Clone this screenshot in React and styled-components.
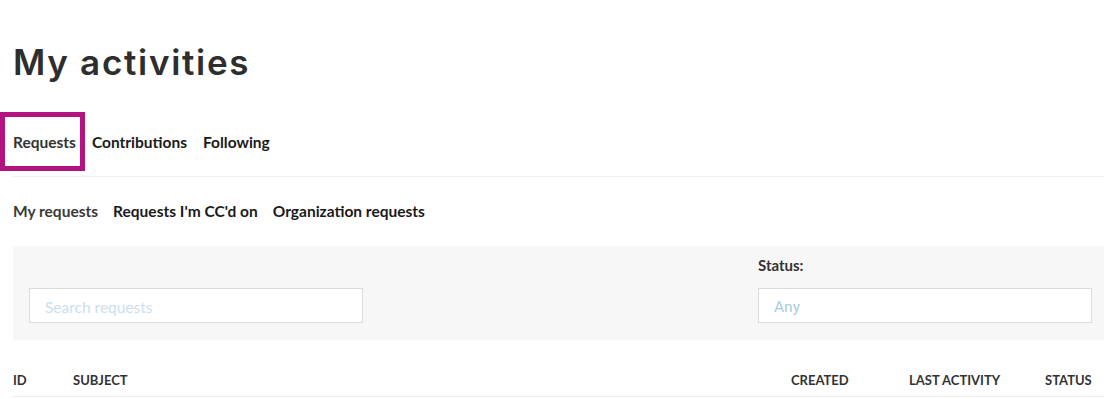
import React from 'react';
import styled, { createGlobalStyle } from 'styled-components';

const GlobalStyle = createGlobalStyle`
  html, body {
    margin: 0;
    padding: 0;
    background: #fff;
    overflow: hidden;
  }
  body {
    font-family: Lato, "Liberation Sans", sans-serif;
    color: #333;
  }
`;

const Page = styled.main`
  width: 1095px;
  padding: 41px 0 0 13px;
`;

const Title = styled.h1`
  margin: 0;
  font-family: Inter, "DejaVu Sans", sans-serif;
  font-size: 35px;
  line-height: 42px;
  font-weight: 600;
  letter-spacing: 1.7px;
  color: #2e2e2e;
`;

const TabList = styled.nav`
  display: flex;
  gap: 16px;
  margin-top: 35px;
  padding-bottom: 10px;
  border-bottom: 1px solid #efefef;
`;

const Tab = styled.a`
  position: relative;
  padding: 14px 0;
  font-size: 15.5px;
  line-height: 20px;
  font-weight: 700;
  color: ${({ $active }) => ($active ? '#333' : '#1a1a1a')};
  text-decoration: none;

  ${({ $focused }) =>
    $focused &&
    `
    &::after {
      content: '';
      position: absolute;
      top: -6px;
      bottom: -5px;
      left: -13px;
      right: -9px;
      border: 5px solid #b3137f;
    }
  `}
`;

const SubNav = styled.nav`
  display: flex;
  gap: 15px;
  margin-top: 24px;
`;

const SubLink = styled.a`
  font-size: 15.5px;
  line-height: 20px;
  font-weight: 700;
  color: ${({ $active }) => ($active ? '#3a3a3a' : '#1a1a1a')};
  text-decoration: none;
`;

const FilterBox = styled.section`
  display: flex;
  justify-content: space-between;
  align-items: flex-end;
  margin-top: 25px;
  padding: 9px 16px 17px;
  background: #f7f7f7;
`;

const Field = styled.div`
  display: flex;
  flex-direction: column;
  width: 334px;
`;

const Label = styled.label`
  font-size: 15px;
  line-height: 20px;
  font-weight: 700;
  color: #333;
  margin-bottom: 13px;
`;

const Input = styled.input`
  box-sizing: border-box;
  height: 35px;
  padding: 2px 15px 0;
  border: 1px solid #dddddd;
  background: #fff;
  font-family: ${({ $alt }) => ($alt ? 'Roboto, "Liberation Sans", sans-serif' : 'Lato, "Liberation Sans", sans-serif')};
  font-size: 15.5px;
  outline: none;

  &::placeholder {
    color: ${({ $alt }) => ($alt ? '#a8cde3' : '#cbe0ee')};
    opacity: 1;
  }
`;

const HeaderRow = styled.div`
  display: grid;
  grid-template-columns: 60px 1fr 118px 136px 46px;
  margin-top: 30px;
  padding: 0 17px 6px 0;
  border-bottom: 1px solid #efefef;
`;

const HeaderCell = styled.span`
  font-size: 13px;
  line-height: 20px;
  font-weight: 700;
  text-transform: uppercase;
  color: #333;
  white-space: nowrap;
`;

const tabs = [
  { label: 'Requests', focused: true, active: true },
  { label: 'Contributions' },
  { label: 'Following' },
];

const subLinks = [
  { label: 'My requests', active: true },
  { label: "Requests I'm CC'd on" },
  { label: 'Organization requests' },
];

const columns = ['ID', 'Subject', 'Created', 'Last activity', 'Status'];

const App = () => (
  <>
    <GlobalStyle />
    <Page>
      <Title>My activities</Title>

      <TabList>
        {tabs.map((t) => (
          <Tab key={t.label} href="#" $focused={t.focused} $active={t.active}>
            {t.label}
          </Tab>
        ))}
      </TabList>

      <SubNav>
        {subLinks.map((l) => (
          <SubLink key={l.label} href="#" $active={l.active}>
            {l.label}
          </SubLink>
        ))}
      </SubNav>

      <FilterBox>
        <Field>
          <Input type="search" placeholder="Search requests" />
        </Field>
        <Field>
          <Label>Status:</Label>
          <Input $alt placeholder="Any" />
        </Field>
      </FilterBox>

      <HeaderRow>
        {columns.map((c) => (
          <HeaderCell key={c}>{c}</HeaderCell>
        ))}
      </HeaderRow>
    </Page>
  </>
);

export default App;
